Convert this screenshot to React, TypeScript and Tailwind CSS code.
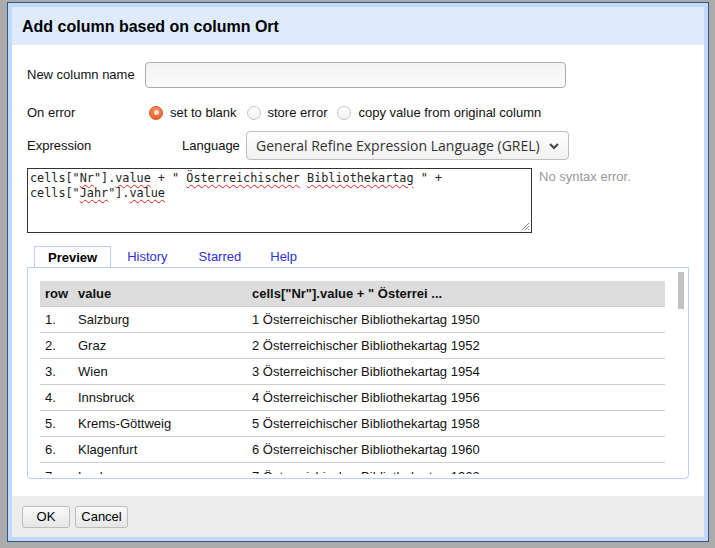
import React from 'react';

const rows = [
  ['1.', 'Salzburg', '1 Österreichischer Bibliothekartag 1950'],
  ['2.', 'Graz', '2 Österreichischer Bibliothekartag 1952'],
  ['3.', 'Wien', '3 Österreichischer Bibliothekartag 1954'],
  ['4.', 'Innsbruck', '4 Österreichischer Bibliothekartag 1956'],
  ['5.', 'Krems-Göttweig', '5 Österreichischer Bibliothekartag 1958'],
  ['6.', 'Klagenfurt', '6 Österreichischer Bibliothekartag 1960'],
  ['7.', 'Leoben', '7 Österreichischer Bibliothekartag 1962'],
];

const Radio: React.FC<{ checked?: boolean; label: string }> = ({ checked, label }) => (
  <label className="flex items-center">
    {checked ? (
      <span className="flex h-[14px] w-[14px] items-center justify-center rounded-full border border-[#d9521c] bg-gradient-to-b from-[#f58a5a] to-[#e8622c]">
        <span className="h-[5px] w-[5px] rounded-full bg-[#fbe3d8]" />
      </span>
    ) : (
      <span className="h-[14px] w-[14px] rounded-full border border-[#c4c4c4] bg-gradient-to-b from-white to-[#f2f2f2]" />
    )}
    <span className="ml-[7px]">{label}</span>
  </label>
);

const Spell: React.FC<{ children: React.ReactNode }> = ({ children }) => (
  <span className="underline decoration-wavy decoration-[#e02020] decoration-1 underline-offset-[2px]">
    {children}
  </span>
);

export default function App() {
  return (
    <div className="h-[548px] w-[715px] overflow-hidden bg-[#ababab] pl-[7px] pt-[2px] font-['Liberation_Sans',Arial,sans-serif] text-[13px] text-[#111]">
      {/* Dialog */}
      <div className="h-[540px] w-[702px] border border-[#35567e] bg-[#c3d9f9] p-[4px]">
        <div className="flex h-full flex-col">
          {/* Header */}
          <div className="flex h-[38px] items-center bg-[#dfeafd] pl-[10px] pt-[1px]">
            <h1 className="text-[16px] font-bold text-black">Add column based on column Ort</h1>
          </div>

          {/* Body */}
          <div className="flex-grow bg-white px-[15px] pt-[17px]">
            <div className="flex h-[26px] items-center">
              <span className="w-[118px]">New column name</span>
              <input className="h-[26px] w-[421px] rounded-[4px] border border-[#ababab] bg-gradient-to-b from-[#f3f3f3] to-[#fbfbfb] px-2" />
            </div>

            <div className="mt-[14px] flex h-[20px] items-center pt-[1px]">
              <span className="w-[122px]">On error</span>
              <div className="flex items-center gap-[10px]">
                <Radio checked label="set to blank" />
                <Radio label="store error" />
                <Radio label="copy value from original column" />
              </div>
            </div>

            <div className="mt-[9px] flex h-[29px] items-center">
              <span className="w-[155px]">Expression</span>
              <span className="w-[64px]">Language</span>
              <div className="flex h-[29px] w-[323px] items-center justify-between rounded-[4px] border border-[#bdbdbd] bg-gradient-to-b from-white to-[#f1f1f1] pl-[9px] pr-[8px] font-['Open_Sans',sans-serif] text-[14px] text-[#333]">
                <span>General Refine Expression Language (GREL)</span>
                <svg width="12" height="12" viewBox="0 0 12 12">
                  <path d="M2 4 L6 8 L10 4" fill="none" stroke="#444" strokeWidth="2" />
                </svg>
              </div>
            </div>

            <div className="mt-[8px] flex">
              <div className="relative h-[65px] w-[505px] border border-[#333] bg-white px-[2px] pt-[2px] font-['DejaVu_Sans_Mono',monospace] text-[11.8px] leading-[15px] text-[#222]">
                <div>
                  cells["<Spell>Nr</Spell>"].<Spell>value</Spell> + " <Spell>Österreichischer</Spell>{' '}
                  <Spell>Bibliothekartag</Spell> " +
                </div>
                <div>
                  cells["<Spell>Jahr</Spell>"].<Spell>value</Spell>
                </div>
                <svg className="absolute bottom-[1px] right-[1px]" width="10" height="10" viewBox="0 0 10 10">
                  <path d="M9 2 L2 9 M9 5 L5 9 M9 8 L8 9" stroke="#888" strokeWidth="1" />
                </svg>
              </div>
              <span className="ml-[7px] -mt-[1px] text-[#999]">No syntax error.</span>
            </div>

            {/* Tabs */}
            <div className="mt-[13px] flex h-[22px] items-stretch pl-[7px]">
              <div className="flex items-center border border-b-0 border-[#b9cef5] bg-white px-[13px] font-bold text-black">
                Preview
              </div>
              <div className="flex items-center px-[16px] text-[#2f2fdc]">History</div>
              <div className="flex items-center px-[15px] text-[#2f2fdc]">Starred</div>
              <div className="flex items-center px-[14px] text-[#2f2fdc]">Help</div>
            </div>
            <div className="relative -mt-px h-[212px] rounded-b-[4px] border border-[#b9cef5] pl-[12px] pr-[23px] pt-[3px]">
              <div className="h-[203px] overflow-hidden pt-[10px]">
                <table className="w-full table-fixed border-collapse text-left">
                  <colgroup>
                    <col className="w-[38px]" />
                    <col className="w-[174px]" />
                    <col />
                  </colgroup>
                  <thead>
                    <tr className="h-[25px] bg-[#dcdcdc] font-bold">
                      <th className="pl-[5px]">row</th>
                      <th>value</th>
                      <th>cells["Nr"].value + " Österrei ...</th>
                    </tr>
                  </thead>
                  <tbody>
                    {rows.map((r) => (
                      <tr key={r[0]} className="h-[26px] border-t border-[#cccccc]">
                        <td className="pl-[5px] pt-[2px]">{r[0]}</td>
                        <td className="pt-[2px]">{r[1]}</td>
                        <td className="pt-[2px]">{r[2]}</td>
                      </tr>
                    ))}
                  </tbody>
                </table>
              </div>
              <div className="absolute right-[4px] top-[4px] h-[37px] w-[6px] bg-[#c1c1c1]" />
            </div>
          </div>

          {/* Footer */}
          <div className="flex h-[41px] items-start gap-[5px] bg-[#ececec] pl-[10px] pt-[10px]">
            <button className="h-[22px] w-[48px] rounded-[3px] border border-[#bcbcbc] bg-gradient-to-b from-[#fafafa] to-[#e6e6e6] text-[13px] text-black">
              OK
            </button>
            <button className="h-[22px] w-[53px] rounded-[3px] border border-[#bcbcbc] bg-gradient-to-b from-[#fafafa] to-[#e6e6e6] text-[13px] text-black">
              Cancel
            </button>
          </div>
        </div>
      </div>
    </div>
  );
}
